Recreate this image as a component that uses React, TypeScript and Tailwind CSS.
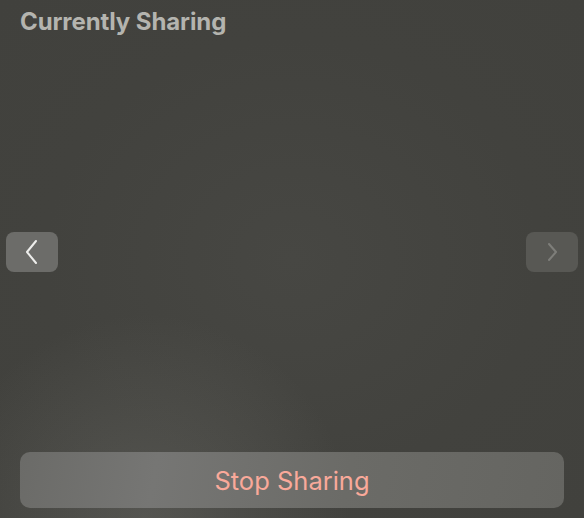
import React from "react";

export default function App() {
  return (
    <div
      className="relative w-[584px] h-[518px] overflow-hidden bg-[#42423e] flex flex-col"
      style={{ fontFamily: "Inter, 'Noto Sans', sans-serif" }}
    >
      <div className="absolute inset-0 bg-[radial-gradient(ellipse_at_50%_50%,#474743_0%,#42423e_60%,#41413d_100%)]" />
      <div className="absolute inset-0 bg-[radial-gradient(circle_at_25%_100%,rgba(120,120,115,0.35)_0%,rgba(120,120,115,0)_30%)]" />
      <div className="relative flex flex-col h-full">
        <div className="pl-5 pt-[7px] text-[24px] font-bold text-[#b4b4af] leading-[30px] tracking-[-0.1px]">
          Currently Sharing
        </div>
        <div className="flex-1 flex items-center justify-between px-[6px] pt-[19px] pb-[5px]">
          <button className="w-[52px] h-[40px] rounded-[8px] bg-[#6c6c69] flex items-center justify-center">
            <svg width="16" height="26" viewBox="0 0 16 26" fill="none">
              <path d="M12 2 L3 13 L12 24" stroke="#ededeb" strokeWidth="2" strokeLinecap="round" strokeLinejoin="round" />
            </svg>
          </button>
          <button className="w-[52px] h-[40px] rounded-[8px] bg-[#585854] flex items-center justify-center">
            <svg width="16" height="24" viewBox="0 0 16 24" fill="none">
              <path d="M5 4 L12 12 L5 20" stroke="#7e7e7a" strokeWidth="2" strokeLinecap="round" strokeLinejoin="round" />
            </svg>
          </button>
        </div>
        <div className="px-5 pb-[10px]">
          <button className="w-full h-[56px] rounded-[10px] bg-[linear-gradient(100deg,#6b6b68_0%,#767674_25%,#6b6b67_60%,#656561_100%)] text-[#f9a99a] text-[25.5px] leading-none flex items-center justify-center pt-[2px]">
            Stop Sharing
          </button>
        </div>
      </div>
    </div>
  );
}
